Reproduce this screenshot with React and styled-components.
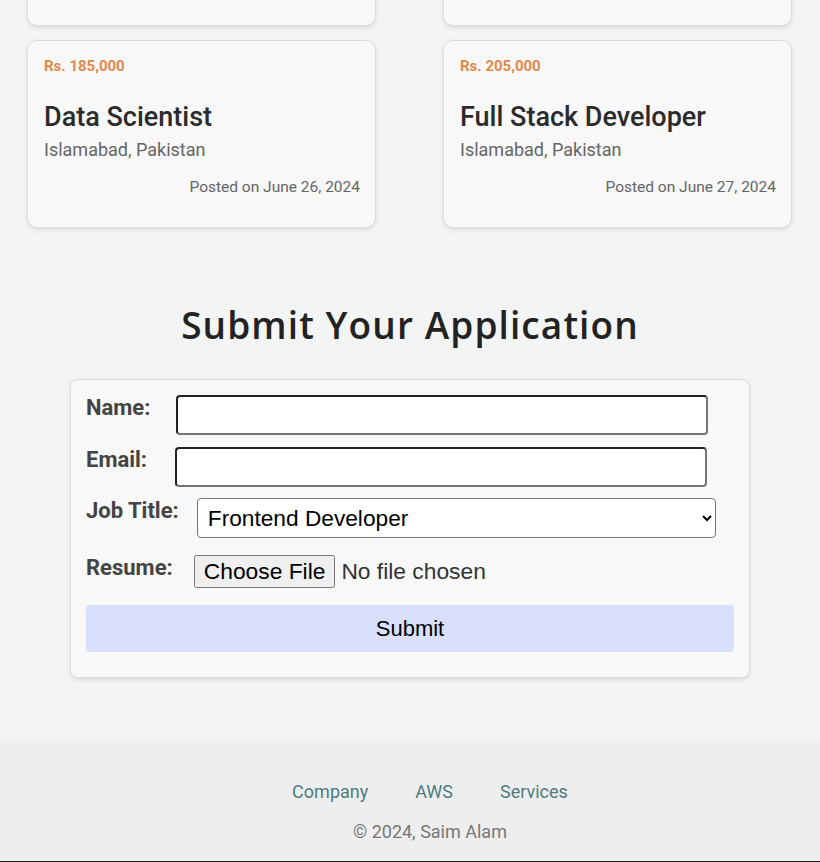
import React from "react";
import styled, { createGlobalStyle } from "styled-components";

const GlobalStyle = createGlobalStyle`
  body {
    margin: 0;
    background: #f3f4f4;
    font-family: Roboto, "Liberation Sans", sans-serif;
    overflow: hidden;
  }
`;

const Page = styled.div`
  min-height: 862px;
  display: flex;
  flex-direction: column;
`;

const JobGrid = styled.div`
  display: grid;
  grid-template-columns: 1fr 1fr;
  column-gap: 67px;
  row-gap: 14px;
  padding: 0 28px 0 27px;
  margin-top: -162px;
`;

const Card = styled.div`
  height: 188px;
  box-sizing: border-box;
  background: #f8f8f8;
  border: 1px solid #dcdcdc;
  border-radius: 10px;
  box-shadow: 0 2px 4px rgba(0, 0, 0, 0.1);
  padding: 16px 15px 0 16px;
  display: flex;
  flex-direction: column;
`;

const Price = styled.div`
  color: #e08a4c;
  font-weight: 700;
  font-size: 15px;
  line-height: 18px;
`;

const JobTitle = styled.h3`
  margin: 26px 0 0 0;
  font-size: 27px;
  font-weight: 500;
  line-height: 32px;
  color: #2b2b2b;
`;

const Location = styled.div`
  margin-top: 6px;
  font-size: 18px;
  line-height: 21px;
  color: #666;
`;

const Posted = styled.div`
  margin-top: 18px;
  text-align: right;
  font-size: 15.5px;
  line-height: 18px;
  color: #666;
`;

const Apply = styled.section`
  display: flex;
  flex-direction: column;
  align-items: center;
`;

const Heading = styled.h2`
  margin: 75px 0 32px 0;
  font-family: "Open Sans", sans-serif;
  font-weight: 600;
  font-size: 37px;
  letter-spacing: 1.1px;
  line-height: 44px;
  color: #222;
`;

const Form = styled.form`
  width: 680px;
  box-sizing: border-box;
  background: #f8f8f8;
  border: 1px solid #dcdcdc;
  border-radius: 8px;
  box-shadow: 0 2px 4px rgba(0, 0, 0, 0.1);
  padding: 15px 15px 25px 15px;
  display: flex;
  flex-direction: column;
`;

const Row = styled.div`
  display: flex;
  align-items: flex-start;
  gap: ${(p) => p.$gap}px;
  margin-bottom: ${(p) => p.$space}px;
`;

const Label = styled.label`
  font-size: 22px;
  font-weight: 700;
  line-height: 26px;
  color: #444;
`;

const TextInput = styled.input`
  width: 532px;
  height: 40px;
  box-sizing: border-box;
  border: 2px inset #767676;
  border-radius: 4px;
  background: #fff;
  font-size: 20px;
  font-family: "Liberation Sans", Arial, sans-serif;
`;

const Select = styled.select`
  width: 519px;
  height: 40px;
  box-sizing: border-box;
  border: 1px solid #767676;
  border-radius: 4px;
  background: #fff;
  padding: 0 6px;
  font-size: 22.7px;
  font-family: "Liberation Sans", Arial, sans-serif;
  color: #000;
`;

const FileInput = styled.input`
  font-size: 22.8px;
  font-family: "Liberation Sans", Arial, sans-serif;
  color: #333;
  margin: 0;

  &::file-selector-button {
    padding: 1px 8px;
    margin-right: 6px;
  }
`;

const SubmitButton = styled.button`
  width: 100%;
  height: 47px;
  border: none;
  border-radius: 4px;
  background: #d9e0fe;
  font-size: 22px;
  font-family: "Liberation Sans", Arial, sans-serif;
  color: #000;
`;

const Footer = styled.footer`
  margin-top: auto;
  background: #eeeeee;
  border-bottom: 1px solid #222;
  padding: 40px 0 19px 40px;
  display: flex;
  flex-direction: column;
  align-items: center;
`;

const Links = styled.div`
  display: flex;
  gap: 47px;
`;

const FooterLink = styled.a`
  font-size: 18px;
  line-height: 21px;
  color: #4d7c80;
  text-decoration: none;
`;

const Copy = styled.div`
  margin-top: 19px;
  font-size: 18px;
  line-height: 21px;
  color: #777;
`;

const jobs = [
  { price: "Rs. 150,000", title: "Frontend Developer", date: "June 24, 2024" },
  { price: "Rs. 170,000", title: "Backend Developer", date: "June 25, 2024" },
  { price: "Rs. 185,000", title: "Data Scientist", date: "June 26, 2024" },
  { price: "Rs. 205,000", title: "Full Stack Developer", date: "June 27, 2024" },
];

export default function App() {
  return (
    <Page>
      <GlobalStyle />
      <JobGrid>
        {jobs.map((job) => (
          <Card key={job.title}>
            <Price>{job.price}</Price>
            <JobTitle>{job.title}</JobTitle>
            <Location>Islamabad, Pakistan</Location>
            <Posted>Posted on {job.date}</Posted>
          </Card>
        ))}
      </JobGrid>

      <Apply>
        <Heading>Submit Your Application</Heading>
        <Form onSubmit={(e) => e.preventDefault()}>
          <Row $gap={26} $space={12}>
            <Label>Name:</Label>
            <TextInput type="text" />
          </Row>
          <Row $gap={28} $space={11}>
            <Label>Email:</Label>
            <TextInput type="email" />
          </Row>
          <Row $gap={18} $space={17}>
            <Label>Job Title:</Label>
            <Select defaultValue="Frontend Developer">
              <option>Frontend Developer</option>
              <option>Backend Developer</option>
              <option>Data Scientist</option>
              <option>Full Stack Developer</option>
            </Select>
          </Row>
          <Row $gap={21} $space={17}>
            <Label>Resume:</Label>
            <FileInput type="file" />
          </Row>
          <SubmitButton type="submit">Submit</SubmitButton>
        </Form>
      </Apply>

      <Footer>
        <Links>
          <FooterLink href="#">Company</FooterLink>
          <FooterLink href="#">AWS</FooterLink>
          <FooterLink href="#">Services</FooterLink>
        </Links>
        <Copy>© 2024, Saim Alam</Copy>
      </Footer>
    </Page>
  );
}
